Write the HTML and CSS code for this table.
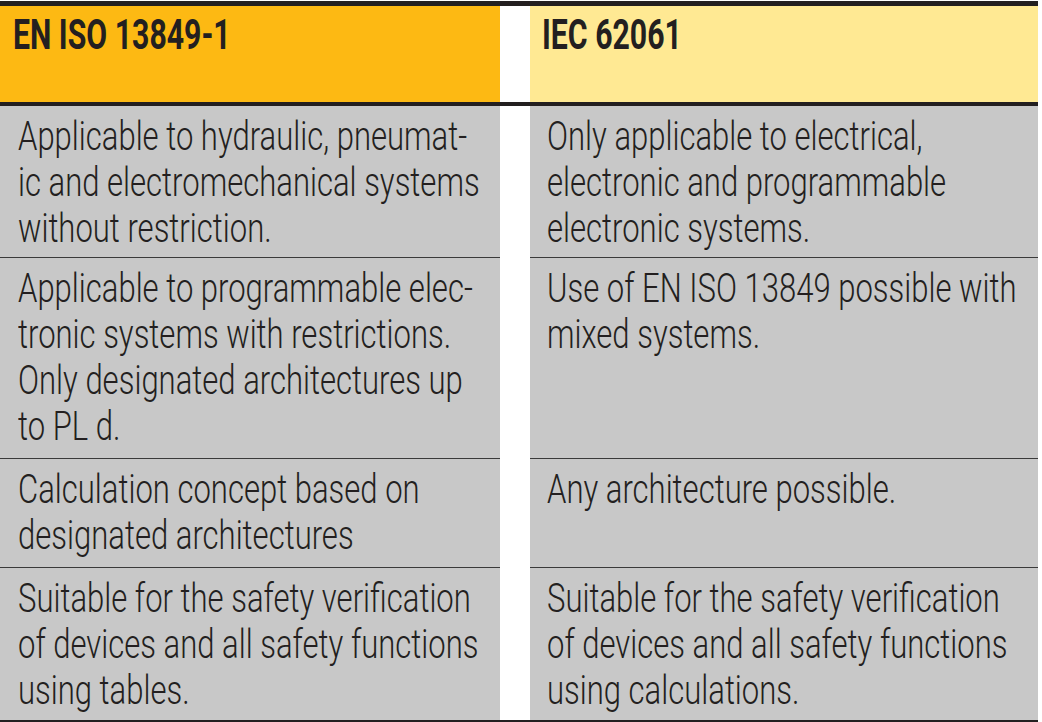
FILE: index.html
```html
<!DOCTYPE html>
<html lang="en">
<head>
<meta charset="utf-8">
<title>EN ISO 13849-1 vs IEC 62061</title>
<link rel="stylesheet" href="styles.css">
</head>
<body>
<div class="table">
  <div class="head head-iso"><span class="txt">EN ISO 13849-1</span></div>
  <div class="head head-iec"><span class="txt">IEC 62061</span></div>
  <div class="rule"></div>

  <div class="cell"><span class="txt">Applicable to hydraulic, pneumat-<br>ic and electromechanical systems<br>without restriction.</span></div>
  <div class="cell cell-r"><span class="txt">Only applicable to electrical,<br>electronic and programmable<br>electronic systems.</span></div>

  <div class="cell"><span class="txt">Applicable to programmable elec-<br>tronic systems with restrictions.<br>Only designated architectures up<br>to PL d.</span></div>
  <div class="cell cell-r"><span class="txt">Use of EN ISO 13849 possible with<br>mixed systems.</span></div>

  <div class="cell"><span class="txt">Calculation concept based on<br>designated architectures</span></div>
  <div class="cell cell-r"><span class="txt">Any architecture possible.</span></div>

  <div class="cell last"><span class="txt">Suitable for the safety verification<br>of devices and all safety functions<br>using tables.</span></div>
  <div class="cell cell-r last"><span class="txt">Suitable for the safety verification<br>of devices and all safety functions<br>using calculations.</span></div>
</div>
</body>
</html>
```

FILE: styles.css
```css
html, body {
  margin: 0;
  padding: 0;
  background: #ffffff;
}

body {
  padding-top: 1px;
  font-family: Roboto, "Liberation Sans", sans-serif;
  color: #231f20;
}

.table {
  width: 1038px;
  display: grid;
  grid-template-columns: 500px 508px;
  grid-template-rows: 96px 4px 152px 201px 109px 152px;
  column-gap: 30px;
  border-top: 5px solid #231f20;
  border-bottom: 2px solid #231f20;
}

.txt {
  display: inline-block;
  white-space: nowrap;
  transform-origin: 0 0;
}

.head {
  font-weight: 700;
  font-size: 42px;
  line-height: 46px;
  padding: 6px 0 0 13px;
  overflow: hidden;
}

.head .txt {
  transform: scaleX(0.72);
}

.head-iso {
  background: #fdb913;
}

.head-iec {
  background: #ffe993;
  padding-left: 12px;
}

.rule {
  grid-column: 1 / -1;
  background: #231f20;
}

.cell {
  background: #c8c8c8;
  border-bottom: 1px solid #3a3a3a;
  font-size: 41px;
  font-weight: 300;
  line-height: 46px;
  padding: 7px 0 0 18px;
  overflow: hidden;
}

.cell .txt {
  transform: scaleX(0.757);
}

.cell-r {
  padding-left: 17px;
}

.cell.last {
  border-bottom: none;
}
```
